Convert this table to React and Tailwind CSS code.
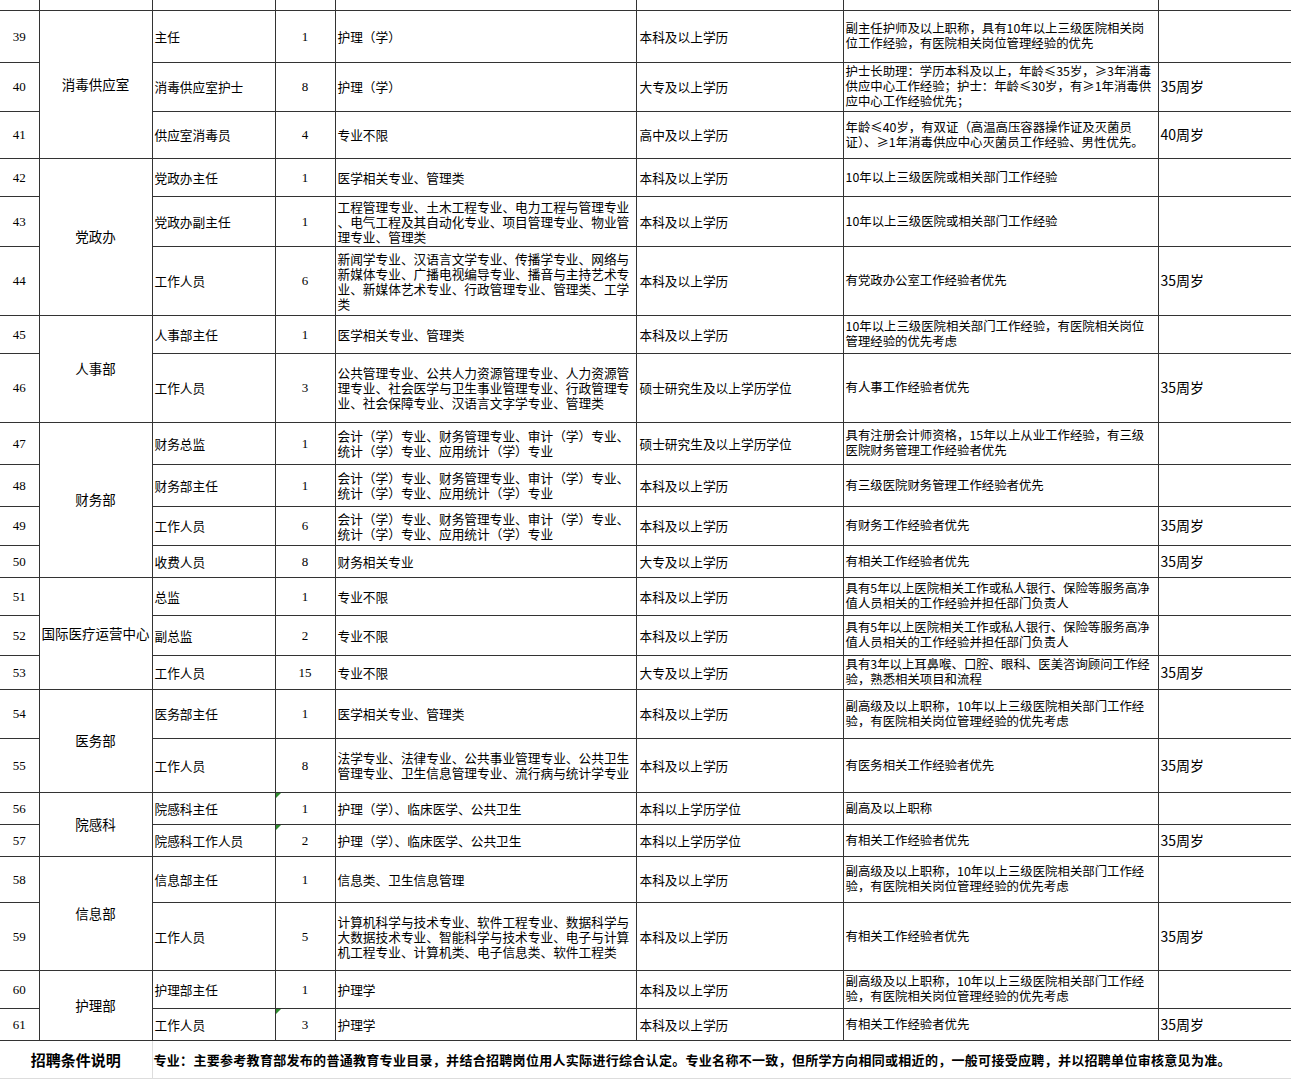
const FIN = ["会计（学）专业、财务管理专业、审计（学）专业、", "统计（学）专业、应用统计（学）专业"];
const SENIOR = ["副高级及以上职称，10年以上三级医院相关部门工作经", "验，有医院相关岗位管理经验的优先考虑"];
const INTL = ["具有5年以上医院相关工作或私人银行、保险等服务高净", "值人员相关的工作经验并担任部门负责人"];

const groups = [
  {
    dept: "消毒供应室",
    rows: [
      { no: 39, h: 52, pos: "主任", n: "1", major: ["护理（学）"], edu: "本科及以上学历", req: ["副主任护师及以上职称，具有10年以上三级医院相关岗", "位工作经验，有医院相关岗位管理经验的优先"], age: "" },
      { no: 40, h: 49, pos: "消毒供应室护士", n: "8", major: ["护理（学）"], edu: "大专及以上学历", req: ["护士长助理：学历本科及以上，年龄≤35岁，≥3年消毒", "供应中心工作经验；护士：年龄≤30岁，有≥1年消毒供", "应中心工作经验优先；"], age: "35周岁" },
      { no: 41, h: 47, pos: "供应室消毒员", n: "4", major: ["专业不限"], edu: "高中及以上学历", req: ["年龄≤40岁，有双证（高温高压容器操作证及灭菌员", "证）、≥1年消毒供应中心灭菌员工作经验、男性优先。"], age: "40周岁" },
    ],
  },
  {
    dept: "党政办",
    rows: [
      { no: 42, h: 38, pos: "党政办主任", n: "1", major: ["医学相关专业、管理类"], edu: "本科及以上学历", req: ["10年以上三级医院或相关部门工作经验"], age: "" },
      { no: 43, h: 50, pos: "党政办副主任", n: "1", major: ["工程管理专业、土木工程专业、电力工程与管理专业", "、电气工程及其自动化专业、项目管理专业、物业管", "理专业、管理类"], edu: "本科及以上学历", req: ["10年以上三级医院或相关部门工作经验"], age: "" },
      { no: 44, h: 69, pos: "工作人员", n: "6", major: ["新闻学专业、汉语言文学专业、传播学专业、网络与", "新媒体专业、广播电视编导专业、播音与主持艺术专", "业、新媒体艺术专业、行政管理专业、管理类、工学", "类"], edu: "本科及以上学历", req: ["有党政办公室工作经验者优先"], age: "35周岁" },
    ],
  },
  {
    dept: "人事部",
    rows: [
      { no: 45, h: 38, pos: "人事部主任", n: "1", major: ["医学相关专业、管理类"], edu: "本科及以上学历", req: ["10年以上三级医院相关部门工作经验，有医院相关岗位", "管理经验的优先考虑"], age: "" },
      { no: 46, h: 69, pos: "工作人员", n: "3", major: ["公共管理专业、公共人力资源管理专业、人力资源管", "理专业、社会医学与卫生事业管理专业、行政管理专", "业、社会保障专业、汉语言文字学专业、管理类"], edu: "硕士研究生及以上学历学位", req: ["有人事工作经验者优先"], age: "35周岁" },
    ],
  },
  {
    dept: "财务部",
    rows: [
      { no: 47, h: 42, pos: "财务总监", n: "1", major: FIN, edu: "硕士研究生及以上学历学位", req: ["具有注册会计师资格，15年以上从业工作经验，有三级", "医院财务管理工作经验者优先"], age: "" },
      { no: 48, h: 42, pos: "财务部主任", n: "1", major: FIN, edu: "本科及以上学历", req: ["有三级医院财务管理工作经验者优先"], age: "" },
      { no: 49, h: 39, pos: "工作人员", n: "6", major: FIN, edu: "本科及以上学历", req: ["有财务工作经验者优先"], age: "35周岁" },
      { no: 50, h: 32, pos: "收费人员", n: "8", major: ["财务相关专业"], edu: "大专及以上学历", req: ["有相关工作经验者优先"], age: "35周岁" },
    ],
  },
  {
    dept: "国际医疗运营中心",
    rows: [
      { no: 51, h: 38, pos: "总监", n: "1", major: ["专业不限"], edu: "本科及以上学历", req: INTL, age: "" },
      { no: 52, h: 40, pos: "副总监", n: "2", major: ["专业不限"], edu: "本科及以上学历", req: INTL, age: "" },
      { no: 53, h: 34, pos: "工作人员", n: "15", major: ["专业不限"], edu: "大专及以上学历", req: ["具有3年以上耳鼻喉、口腔、眼科、医美咨询顾问工作经", "验，熟悉相关项目和流程"], age: "35周岁" },
    ],
  },
  {
    dept: "医务部",
    rows: [
      { no: 54, h: 49, pos: "医务部主任", n: "1", major: ["医学相关专业、管理类"], edu: "本科及以上学历", req: SENIOR, age: "" },
      { no: 55, h: 54, pos: "工作人员", n: "8", major: ["法学专业、法律专业、公共事业管理专业、公共卫生", "管理专业、卫生信息管理专业、流行病与统计学专业"], edu: "本科及以上学历", req: ["有医务相关工作经验者优先"], age: "35周岁" },
    ],
  },
  {
    dept: "院感科",
    rows: [
      { no: 56, h: 32, pos: "院感科主任", n: "1", flag: true, major: ["护理（学）、临床医学、公共卫生"], edu: "本科以上学历学位", req: ["副高及以上职称"], age: "" },
      { no: 57, h: 32, pos: "院感科工作人员", n: "2", flag: true, major: ["护理（学）、临床医学、公共卫生"], edu: "本科以上学历学位", req: ["有相关工作经验者优先"], age: "35周岁" },
    ],
  },
  {
    dept: "信息部",
    rows: [
      { no: 58, h: 46, pos: "信息部主任", n: "1", major: ["信息类、卫生信息管理"], edu: "本科及以上学历", req: SENIOR, age: "" },
      { no: 59, h: 68, pos: "工作人员", n: "5", major: ["计算机科学与技术专业、软件工程专业、数据科学与", "大数据技术专业、智能科学与技术专业、电子与计算", "机工程专业、计算机类、电子信息类、软件工程类"], edu: "本科及以上学历", req: ["有相关工作经验者优先"], age: "35周岁" },
    ],
  },
  {
    dept: "护理部",
    rows: [
      { no: 60, h: 38, pos: "护理部主任", n: "1", major: ["护理学"], edu: "本科及以上学历", req: SENIOR, age: "" },
      { no: 61, h: 32, pos: "工作人员", n: "3", flag: true, major: ["护理学"], edu: "本科及以上学历", req: ["有相关工作经验者优先"], age: "35周岁" },
    ],
  },
];

const cell = "border border-[#333] p-0 align-middle";

function Lines({ lines }) {
  return lines.map((l, i) => (
    <span key={i} className="block whitespace-nowrap">
      {l}
    </span>
  ));
}

export default function App() {
  return (
    <div className="w-[1291px] h-[1080px] overflow-hidden bg-white text-black" style={{ fontFamily: '"Noto Sans CJK SC", "Liberation Sans", sans-serif' }}>
      <table className="w-[1291px] table-fixed border-collapse text-[12.7px] leading-[15px]">
        <colgroup>
          <col className="w-[39px]" />
          <col className="w-[113px]" />
          <col className="w-[123px]" />
          <col className="w-[60px]" />
          <col className="w-[301px]" />
          <col className="w-[207px]" />
          <col className="w-[315px]" />
          <col className="w-[133px]" />
        </colgroup>
        <tbody>
          <tr className="h-[10px]">
            <td className={`${cell} border-t-0 border-l-0`} />
            <td className={`${cell} border-t-0`} />
            <td className={`${cell} border-t-0`} />
            <td className={`${cell} border-t-0`} />
            <td className={`${cell} border-t-0`} />
            <td className={`${cell} border-t-0`} />
            <td className={`${cell} border-t-0`} />
            <td className={`${cell} border-t-0 border-r-0`} />
          </tr>
          {groups.map((g) =>
            g.rows.map((r, i) => (
              <tr key={r.no} style={{ height: r.h }}>
                <td className={`${cell} border-l-0 text-center text-[13px]`} style={{ fontFamily: '"Liberation Serif", serif' }}>
                  {r.no}
                </td>
                {i === 0 && (
                  <td rowSpan={g.rows.length} className={`${cell} text-center text-[13.5px]`}>
                    {g.dept}
                  </td>
                )}
                <td className={`${cell} pl-[2px] whitespace-nowrap`}>{r.pos}</td>
                <td className={`${cell} relative text-center text-[13px]`} style={{ fontFamily: '"Liberation Serif", serif' }}>
                  {r.flag && <span className="absolute left-0 top-0 h-0 w-0 border-t-[5px] border-r-[5px] border-t-[#2e8b2e] border-r-transparent" />}
                  {r.n}
                </td>
                <td className={`${cell} pl-[2px]`}>
                  <Lines lines={r.major} />
                </td>
                <td className={`${cell} pl-[3px] whitespace-nowrap`}>{r.edu}</td>
                <td className={`${cell} pl-[2px] text-[12.4px]`}>
                  <Lines lines={r.req} />
                </td>
                <td className={`${cell} border-r-0 pl-[2px] text-[14px]`}>{r.age}</td>
              </tr>
            ))
          )}
          <tr className="h-[38px]">
            <td colSpan={2} className="border-t border-t-[#333] border-b border-b-[#ddd] border-r border-r-[#ddd] p-0 text-center align-middle text-[15px] font-bold">
              招聘条件说明
            </td>
            <td colSpan={6} className="border-t border-t-[#333] border-b border-b-[#ddd] p-0 pl-[1px] align-middle whitespace-nowrap text-[13px] font-bold tracking-[0.3px]">
              专业：主要参考教育部发布的普通教育专业目录，并结合招聘岗位用人实际进行综合认定。专业名称不一致，但所学方向相同或相近的，一般可接受应聘，并以招聘单位审核意见为准。
            </td>
          </tr>
        </tbody>
      </table>
    </div>
  );
}
